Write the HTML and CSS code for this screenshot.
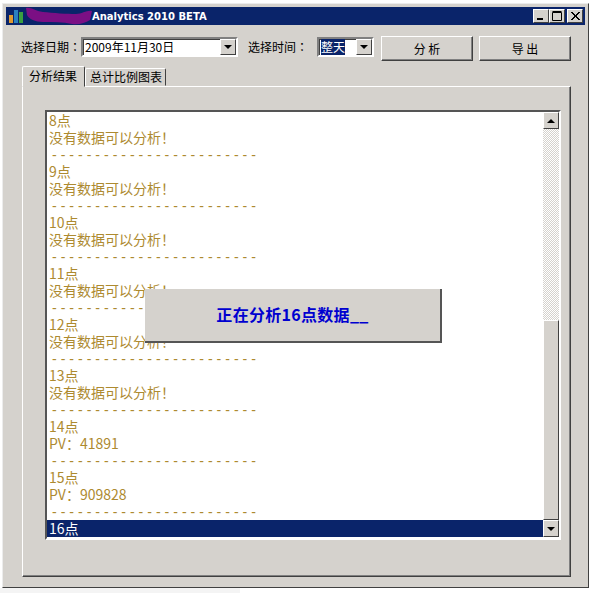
FILE: index.html
```html
<!DOCTYPE html>
<html lang="zh">
<head>
<meta charset="utf-8">
<title>Analytics 2010 BETA</title>
<link rel="stylesheet" href="styles.css">
</head>
<body>
<div class="window">
  <div class="titlebar">
    <svg class="app-icon" width="15" height="14" viewBox="0 0 15 14"><rect x="0" y="6" width="4" height="8" fill="#e09a30"/><rect x="5" y="1" width="4" height="13" fill="#2a7fc0"/><rect x="10" y="3" width="4" height="11" fill="#3aa040"/></svg>
    <svg class="scribble" width="67" height="18" viewBox="0 0 67 18"><path d="M1 1C6 0 10 4 18 5C28 6 42 7 51 7C57 7 62 3 67 4L65 13C60 16 54 18 47 17C38 15 28 15 18 15C10 15 4 12 2 8Z" fill="#7b0f84"/></svg>
    <span class="title">Analytics 2010 BETA</span>
    <div class="controls">
      <span class="ctl"><svg width="14" height="12" viewBox="0 0 14 12"><rect x="3" y="8" width="6" height="2" fill="#000"/></svg></span>
      <span class="ctl"><svg width="14" height="12" viewBox="0 0 14 12"><path d="M2.5 2.5h9v8h-9z M2.5 1.5h9" fill="none" stroke="#000"/></svg></span>
      <span class="ctl ctl-close"><svg width="14" height="12" viewBox="0 0 14 12"><path d="M3 2l8 8M4 2l8 8M11 2l-8 8M12 2l-8 8" stroke="#000"/></svg></span>
    </div>
  </div>
  <div class="toolbar">
    <label class="lbl" lang="zh-Hant">选择日期：</label>
    <div class="combo combo-date"><span class="combo-text">2009年11月30日</span><span class="arrow-btn"><i class="tri-down"></i></span></div>
    <label class="lbl lbl-time" lang="zh-Hant">选择时间：</label>
    <div class="combo combo-time"><span class="combo-text"><span class="sel">整天</span></span><span class="arrow-btn"><i class="tri-down"></i></span></div>
    <button class="btn btn-first">分 析</button>
    <button class="btn">导 出</button>
  </div>
  <div class="tabs">
    <div class="tab active">分析结果</div>
    <div class="tab">总计比例图表</div>
  </div>
  <div class="panel">
    <div class="listbox">
      <div class="lines">
        <div>8点</div><div>没有数据可以分析！</div><div class="dash">------------------------</div>
        <div>9点</div><div>没有数据可以分析！</div><div class="dash">------------------------</div>
        <div>10点</div><div>没有数据可以分析！</div><div class="dash">------------------------</div>
        <div>11点</div><div>没有数据可以分析！</div><div class="dash">------------------------</div>
        <div>12点</div><div>没有数据可以分析！</div><div class="dash">------------------------</div>
        <div>13点</div><div>没有数据可以分析！</div><div class="dash">------------------------</div>
        <div>14点</div><div>PV：41891</div><div class="dash">------------------------</div>
        <div>15点</div><div>PV：909828</div><div class="dash">------------------------</div>
        <div class="selected">16点</div>
      </div>
      <div class="scrollbar">
        <span class="arrow-btn sb-btn"><i class="tri-up"></i></span>
        <div class="track"></div>
        <div class="thumb"></div>
        <span class="arrow-btn sb-btn"><i class="tri-down"></i></span>
      </div>
      <div class="overlay">正在分析16点数据__</div>
    </div>
  </div>
</div>
<div class="shadow-strip"></div>
</body>
</html>
```
FILE: styles.css
```css
* { box-sizing: border-box; }
html, body { margin: 0; padding: 0; background: #fff; }
body { width: 594px; height: 593px; overflow: hidden; font-family: "Noto Sans CJK SC", "Liberation Sans", sans-serif; font-size: 12px; color: #000; }
.window {
  width: 587px; height: 585px; margin: 3px 0 0 2px; padding: 3px;
  background: #d5d2cd;
  border: 1px solid; border-color: #ececec #404040 #404040 #ececec;
}
.titlebar { height: 18px; background: #0a246a; display: flex; align-items: center; padding: 0 2px 0 3px; color: #fff; }
.app-icon { flex: none; }
.scribble { flex: none; margin-left: 1px; }
.title { margin-left: 0; font: bold 10px "DejaVu Sans", sans-serif; white-space: nowrap; }
.controls { margin-left: auto; display: flex; }
.ctl {
  width: 16px; height: 14px; display: flex; align-items: center; justify-content: center; background: #d5d2cd;
  border: 1px solid; border-color: #fff #404040 #404040 #fff;
}
.ctl-close { margin-left: 2px; }
.toolbar { height: 25px; margin-top: 11px; margin-left: 15px; display: flex; align-items: flex-start; }
.lbl { width: 60px; margin-top: 2px; font-family: "Noto Sans CJK TC", sans-serif; font-size: 12px; line-height: 18px; white-space: nowrap; }
.lbl-time { margin-left: 10px; width: 69px; }
.combo {
  height: 20px; margin-top: 1px; display: flex; background: #fff; border: 2px solid; border-color: #808080 #fff #fff #808080;
  box-shadow: inset 1px 1px 0 #404040;
}
.combo-date { width: 157px; }
.combo-time { width: 57px; }
.combo-text { flex: 1; padding: 0 0 0 2px; font: 12px/15px "Noto Sans CJK SC", sans-serif; white-space: nowrap; overflow: hidden; }
.sel { background: #0a246a; color: #fff; }
.arrow-btn {
  width: 16px; height: 16px; flex: none; display: flex; align-items: center; justify-content: center; background: #d5d2cd;
  border: 1px solid; border-color: #fff #404040 #404040 #fff;
}
.tri-down { width: 0; height: 0; border: 4px solid transparent; border-top-color: #000; border-bottom-width: 0; }
.tri-up { width: 0; height: 0; border: 4px solid transparent; border-bottom-color: #000; border-top-width: 0; }
.btn {
  width: 92px; height: 25px; margin-left: 6px; padding: 0; background: #d5d2cd; font: 12px "Noto Sans CJK SC", sans-serif; color: #000;
  border: 1px solid; border-color: #fff #404040 #404040 #fff; box-shadow: inset -1px -1px 0 #808080;
}
.btn-first { margin-left: 7px; }
.tabs { display: flex; margin-top: 5px; margin-left: 16px; height: 20px; align-items: flex-end; position: relative; z-index: 1; }
.tab {
  height: 18px; padding: 0 3px 0 4px; font-size: 12px; line-height: 16px; white-space: nowrap; background: #d5d2cd;
  border: 1px solid; border-color: #fff #404040 #d5d2cd #fff; border-radius: 2px 2px 0 0;
}
.tab.active { height: 21px; width: 63px; padding: 0 0 0 6px; line-height: 18px; margin-bottom: -1px; }
.panel {
  width: 549px; height: 491px; margin-left: 16px; padding: 23px 0 0 22px;
  border: 1px solid; border-color: #fff #404040 #404040 #fff; box-shadow: inset -1px -1px 0 #808080;
}
.listbox {
  position: relative; width: 516px; height: 430px; display: flex; background: #fff;
  border: 2px solid; border-color: #555 #fff #fff #555;
}
.lines { flex: 1; min-width: 0; padding-left: 0; }
.lines > div { height: 17px; padding-left: 2px; font-size: 14px; line-height: 16px; color: #ad8a30; white-space: nowrap; font-weight: 400; }
.lines > .dash { font-family: "Liberation Sans", sans-serif; line-height: 18px; letter-spacing: 4px; padding-left: 5px; }
.lines > .selected { background: #0a246a; color: #fff; }
.scrollbar { width: 16px; flex: none; display: flex; flex-direction: column; }
.sb-btn { height: 17px; }
.track { height: 191px; background: repeating-conic-gradient(#d5d2cd 0 25%, #fff 0 50%) 0 0 / 2px 2px; }
.thumb { height: 200px; background: #d5d2cd; border: 1px solid; border-color: #fff #404040 #404040 #fff; }
.overlay {
  position: absolute; left: 98px; top: 177px; width: 297px; height: 54px; padding-bottom: 2px; background: #d5d2cd;
  display: flex; align-items: center; justify-content: center; font-size: 16px; font-weight: bold; letter-spacing: 0.3px; color: #0000d0;
  border-right: 2px solid #555; border-bottom: 2px solid #555;
}
.shadow-strip { width: 240px; height: 5px; background: #f4f4f4; margin-top: 0; }
```
